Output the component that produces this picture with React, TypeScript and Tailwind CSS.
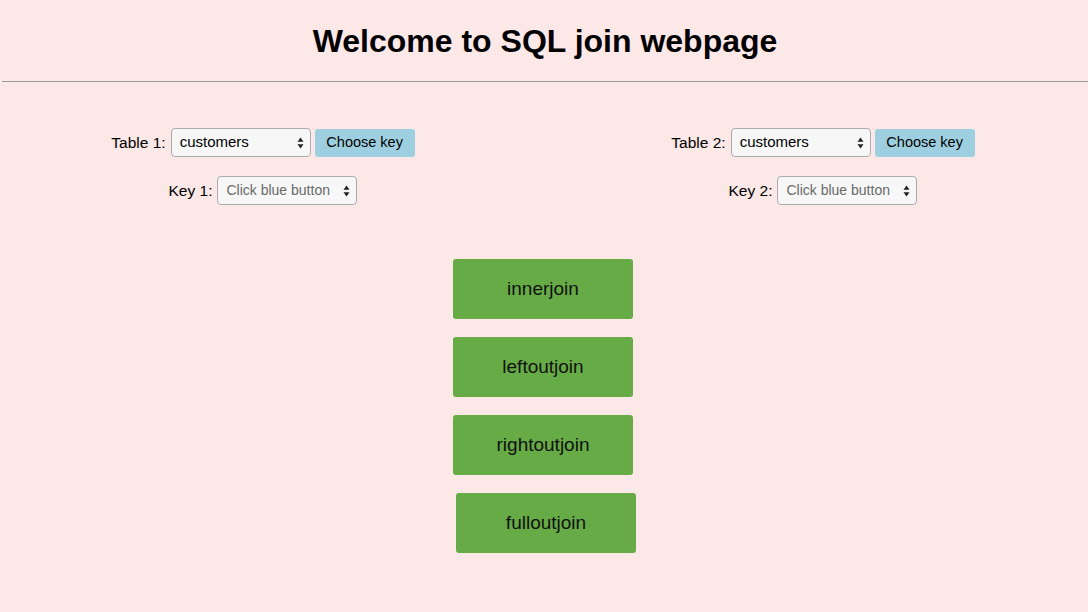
import React from 'react';

const font = { fontFamily: '"Liberation Sans", Arial, Helvetica, sans-serif' };

const Arrows: React.FC = () => (
  <svg width="7" height="12" viewBox="0 0 7 12" className="shrink-0">
    <path d="M3.5 0.5 L6.5 4.8 H0.5 Z" fill="#222" />
    <path d="M3.5 11.5 L6.5 7.2 H0.5 Z" fill="#222" />
  </svg>
);

interface FakeSelectProps {
  value: string;
  muted?: boolean;
}

const FakeSelect: React.FC<FakeSelectProps> = ({ value, muted }) => (
  <div
    className={`w-[140px] h-[29px] flex items-center justify-between pl-[8px] pr-[6px] rounded-[4px] border border-[#ababab] bg-[#f7f7f7] ${
      muted ? 'text-[#6a6a6a] text-[14px]' : 'text-black text-[15px]'
    }`}
  >
    <span className="whitespace-nowrap">{value}</span>
    <Arrows />
  </div>
);

const TablePicker: React.FC<{ n: number }> = ({ n }) => (
  <div className="flex flex-col items-center gap-[19px]">
    <div className="flex items-center">
      <span className="text-[15.5px] mr-[5px]">Table {n}:</span>
      <FakeSelect value="customers" />
      <button className="ml-1 w-[100px] h-[28px] rounded-[3px] bg-[#9ecfe1] text-[14.5px] text-black">
        Choose key
      </button>
    </div>
    <div className="flex items-center">
      <span className="text-[15.5px] mr-[5px]">Key {n}:</span>
      <FakeSelect value="Click blue button" muted />
    </div>
  </div>
);

const joins = ['innerjoin', 'leftoutjoin', 'rightoutjoin', 'fulloutjoin'];

export default function App() {
  return (
    <div className="w-[1088px] h-[612px] bg-[#fce8e6] text-black overflow-hidden" style={font}>
      <div className="h-[81px] flex items-center justify-center pl-[2px]">
        <h1 className="text-[32px] font-bold">Welcome to SQL join webpage</h1>
      </div>
      <hr className="ml-[2px] border-0 border-t border-[#999]" />

      {/* table + key pickers */}
      <div className="grid grid-cols-[526px_526px] gap-x-[34px] pt-[46px]">
        <TablePicker n={1} />
        <TablePicker n={2} />
      </div>

      {/* join buttons */}
      <div className="flex flex-col items-center gap-[18px] mt-[54px] pr-[2px]">
        {joins.map((j, i) => (
          <button
            key={j}
            className={`w-[180px] h-[60px] rounded-[3px] bg-[#66ab45] text-[19px] text-[#111] ${
              i === 3 ? 'translate-x-[3px]' : ''
            }`}
          >
            {j}
          </button>
        ))}
      </div>
    </div>
  );
}
